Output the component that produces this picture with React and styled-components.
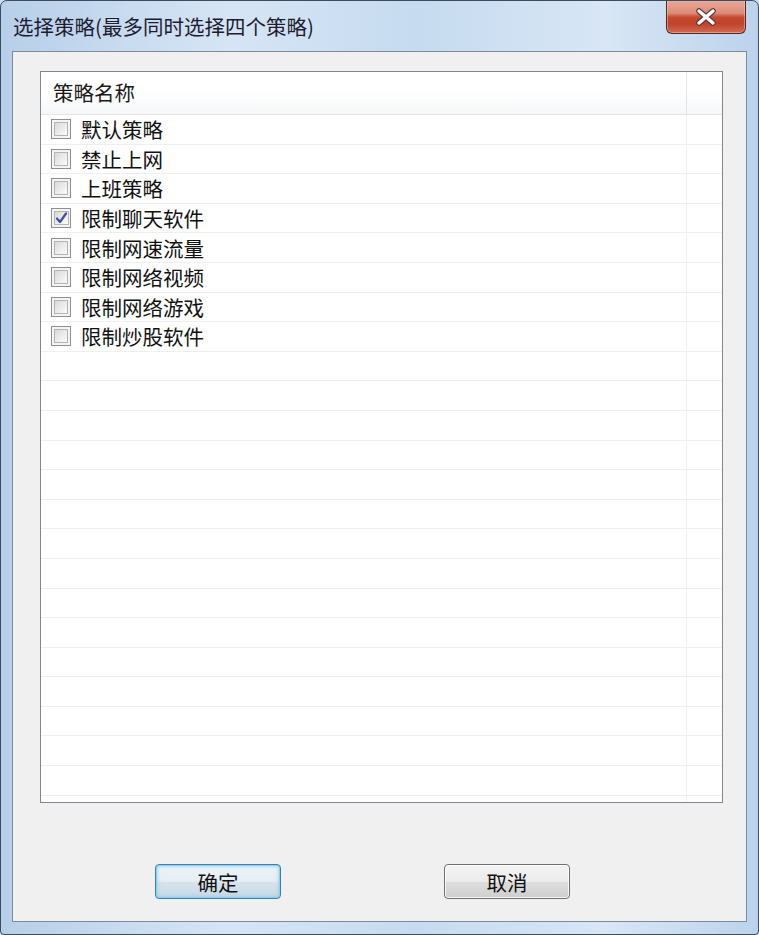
import React from "react";
import styled, { createGlobalStyle } from "styled-components";

const Global = createGlobalStyle`
  html, body { margin: 0; padding: 0; width: 759px; height: 935px; overflow: hidden; background: #c9dcf1; }
  * { box-sizing: border-box; }
`;

const FONT = `"Noto Sans CJK SC", "Noto Sans", sans-serif`;

const Window = styled.div`
  width: 759px;
  height: 935px;
  border: 1px solid #3d4c5e;
  border-radius: 7px 7px 4px 4px;
  background: linear-gradient(90deg, #b7cfe9 0%, #d6e5f5 30%, #c6dbf0 55%, #d8e6f5 80%, #bcd3ec 100%);
  display: flex;
  flex-direction: column;
  padding: 0 11px 12px 11px;
  font-family: ${FONT};
  position: relative;
  overflow: hidden;
`;

const TitleBar = styled.div`
  height: 50px;
  display: flex;
  justify-content: space-between;
  align-items: flex-start;
  flex-shrink: 0;
`;

const Title = styled.div`
  font-size: 20.5px;
  color: #221c30;
  line-height: 50px;
  padding-left: 1px;
  white-space: nowrap;
`;

const CloseButton = styled.div`
  width: 80px;
  height: 34px;
  margin-top: -1px;
  margin-right: 1px;
  border: 1px solid #4f2a25;
  border-top: none;
  border-radius: 0 0 6px 6px;
  background: linear-gradient(180deg, #e9ab9b 0%, #dc8b77 40%, #c54a31 52%, #c0432b 72%, #d46b52 100%);
  box-shadow: inset 0 0 0 1px rgba(255, 210, 200, 0.45);
  display: flex;
  align-items: center;
  justify-content: center;
`;

const Client = styled.div`
  flex: 1;
  border: 1px solid #7d8a9a;
  background: #f0f0f0;
  padding: 19px 22px 0 27px;
  display: flex;
  flex-direction: column;
`;

const List = styled.div`
  width: 683px;
  height: 732px;
  border: 1px solid #828790;
  background: #ffffff;
  display: flex;
  flex-direction: column;
  overflow: hidden;
`;

const Header = styled.div`
  height: 43px;
  flex-shrink: 0;
  display: grid;
  grid-template-columns: 646px 1fr;
  background: linear-gradient(180deg, #ffffff 0%, #ffffff 45%, #f6f7f8 100%);
  border-bottom: 1px solid #e2e3e5;
`;

const HeaderCell = styled.div`
  font-size: 20.5px;
  color: #1a1a1a;
  display: flex;
  align-items: center;
  padding-left: 12px;
  padding-bottom: 2px;
  border-right: ${(p) => (p.$last ? "none" : "1px solid #e3e4e6")};
`;

const Body = styled.div`
  flex: 1;
  display: grid;
  grid-template-columns: 646px 1fr;
  grid-auto-rows: 29.6px;
  overflow: hidden;
`;

const Cell = styled.div`
  border-bottom: 1px solid #efefef;
  border-right: ${(p) => (p.$last ? "none" : "1px solid #f0f0f0")};
  display: flex;
  align-items: center;
  padding-left: 10px;
  gap: 10px;
  font-size: 20.5px;
  color: #111;
  white-space: nowrap;
`;

const Box = styled.div`
  width: 20px;
  height: 20px;
  flex-shrink: 0;
  border: 1px solid #8e8f8f;
  background: #f4f4f4;
  padding: 2px;
  display: flex;
`;

const BoxInner = styled.div`
  flex: 1;
  border: 1px solid #b4b4b4;
  background: linear-gradient(135deg, #d9d9d9 0%, #ececec 55%, #fbfbfb 100%);
  display: flex;
  align-items: center;
  justify-content: center;
`;

const Footer = styled.div`
  display: flex;
  gap: 163px;
  padding-left: 115px;
  margin-top: 61px;
`;

const Button = styled.div`
  width: 126px;
  height: 35px;
  border-radius: 4px;
  border: 1px solid ${(p) => (p.$primary ? "#3c7fb1" : "#707070")};
  background: ${(p) =>
    p.$primary
      ? "linear-gradient(180deg, #eef4f8 0%, #e5edf3 50%, #d6e3ec 52%, #c9d9e5 100%)"
      : "linear-gradient(180deg, #f3f3f3 0%, #ebebeb 50%, #dddddd 52%, #cfcfcf 100%)"};
  box-shadow: ${(p) =>
    p.$primary
      ? "inset 0 0 0 1px #8dd2f3, inset 0 0 3px 2px rgba(120, 200, 240, 0.55)"
      : "inset 0 0 0 1px rgba(255,255,255,0.8)"};
  display: flex;
  align-items: center;
  justify-content: center;
  font-size: 20.5px;
  color: #111;
`;

const Check = () => (
  <svg width="13" height="12" viewBox="0 0 13 12">
    <path d="M2 6.5 L5 10 L11 1.5" fill="none" stroke="#3c4fa0" strokeWidth="2.2" strokeLinecap="round" strokeLinejoin="round" />
  </svg>
);

const CheckBox = ({ checked }) => (
  <Box>
    <BoxInner>{checked && <Check />}</BoxInner>
  </Box>
);

const CloseX = () => (
  <svg width="24" height="18" viewBox="0 0 24 18">
    <path d="M5 3 L19 15 M19 3 L5 15" stroke="#5a3a36" strokeWidth="5.6" strokeLinecap="round" />
    <path d="M5 3 L19 15 M19 3 L5 15" stroke="#ffffff" strokeWidth="3.4" strokeLinecap="round" />
  </svg>
);

const items = [
  { name: "默认策略" },
  { name: "禁止上网" },
  { name: "上班策略" },
  { name: "限制聊天软件", checked: true },
  { name: "限制网速流量" },
  { name: "限制网络视频" },
  { name: "限制网络游戏" },
  { name: "限制炒股软件" },
];

const TOTAL_ROWS = 24;

export default function App() {
  const rows = Array.from({ length: TOTAL_ROWS }, (_, i) => items[i] || null);
  return (
    <>
      <Global />
      <Window>
        <TitleBar>
          <Title>选择策略(最多同时选择四个策略)</Title>
          <CloseButton>
            <CloseX />
          </CloseButton>
        </TitleBar>
        <Client>
          <List>
            <Header>
              <HeaderCell>策略名称</HeaderCell>
              <HeaderCell $last />
            </Header>
            <Body>
              {rows.map((r, i) => (
                <React.Fragment key={i}>
                  <Cell>
                    {r && <CheckBox checked={r.checked} />}
                    {r && <span>{r.name}</span>}
                  </Cell>
                  <Cell $last />
                </React.Fragment>
              ))}
            </Body>
          </List>
          <Footer>
            <Button $primary>确定</Button>
            <Button>取消</Button>
          </Footer>
        </Client>
      </Window>
    </>
  );
}
